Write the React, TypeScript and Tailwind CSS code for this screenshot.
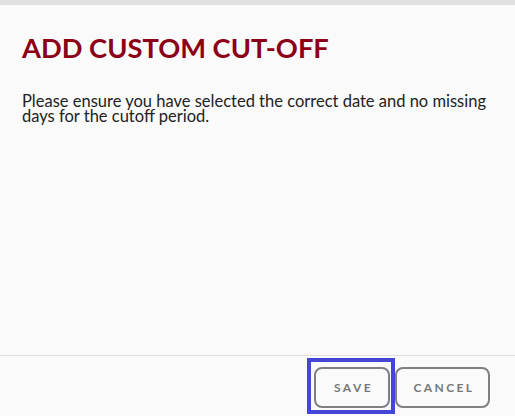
import React from 'react';

export default function App() {
  return (
    <div className="flex h-[416px] w-full flex-col bg-[#fafafa] font-['Lato','Liberation_Sans',sans-serif]">
      <div className="h-[5px] bg-[#e0e0e0]" />

      <div className="flex-1 px-[22px] pt-[26px]">
        <h2 className="text-[27.3px] font-bold leading-[34px] text-[#8b0017]">ADD CUSTOM CUT-OFF</h2>
        <p className="mt-[29px] text-[16.5px] leading-[15px] text-[#222]">
          Please ensure you have selected the correct date and no missing days for the cutoff period.
        </p>
      </div>

      <div className="flex h-[61px] items-start justify-end border-t border-[#dedede] pr-[25px] pt-[2px]">
        <div className="border-4 border-[#4646d6] pb-[2px] pl-[3px] pr-[1px] pt-[5px]">
          <button className="flex h-[41px] w-[76px] items-center justify-center rounded-[8px] border-2 border-[#808080] pl-[3px] text-[12px] font-bold tracking-[0.2em] text-[#777]">
            SAVE
          </button>
        </div>
        <button className="mt-[9px] flex h-[41px] w-[95px] items-center justify-center rounded-[8px] border-2 border-[#808080] pl-[3px] text-[12px] font-bold tracking-[0.2em] text-[#777]">
          CANCEL
        </button>
      </div>
    </div>
  );
}
